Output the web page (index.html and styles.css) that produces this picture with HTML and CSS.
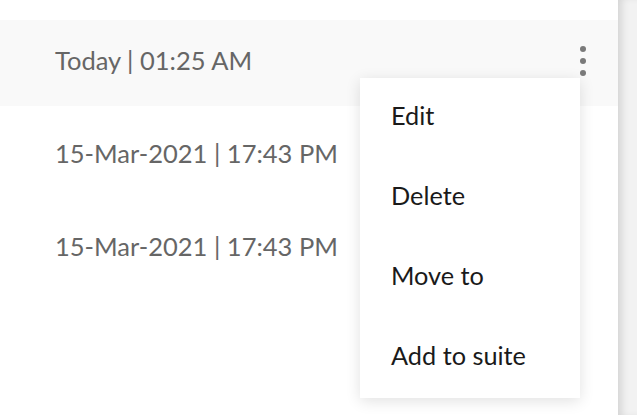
FILE: index.html
```html
<!DOCTYPE html>
<html lang="en">
<head>
    <meta charset="UTF-8">
    <meta name="viewport" content="width=device-width, initial-scale=1.0">
    <title>Runs</title>
    <link rel="stylesheet" href="styles.css">
</head>
<body>
    <div class="layout">
        <!-- Run list -->
        <div class="panel">
            <div class="run-list">
                <div class="run active">
                    <span class="run-date">Today | 01:25 AM</span>
                    <button class="more" aria-label="More">
                        <span class="dot"></span>
                        <span class="dot"></span>
                        <span class="dot"></span>
                    </button>
                </div>
                <div class="run">
                    <span class="run-date">15-Mar-2021 | 17:43 PM</span>
                </div>
                <div class="run">
                    <span class="run-date">15-Mar-2021 | 17:43 PM</span>
                </div>
            </div>

            <!-- Context menu -->
            <ul class="menu">
                <li>Edit</li>
                <li>Delete</li>
                <li>Move to</li>
                <li>Add to suite</li>
            </ul>
        </div>
        <div class="side"></div>
    </div>
</body>
</html>
```

FILE: styles.css
```css
/* Reset */
* {
    margin: 0;
    padding: 0;
    box-sizing: border-box;
}
body {
    font-family: Lato, "Noto Sans", sans-serif;
    background-color: #fff;
    color: #222;
}

.layout {
    display: flex;
    height: 415px;
    overflow: hidden;
}

/* Run list */
.panel {
    position: relative;
    flex: 0 0 618px;
    background-color: #fff;
}
.run-list {
    padding-top: 20px;
}
.run {
    height: 86px;
    margin-bottom: 7px;
    padding: 0 32px 0 55px;
    display: flex;
    align-items: center;
    justify-content: space-between;
}
.run.active {
    background-color: #f9f9f9;
}
.run-date {
    font-size: 25.5px;
    color: #666;
    margin-top: -7px;
}

/* Kebab button */
.more {
    display: flex;
    flex-direction: column;
    gap: 6px;
    border: none;
    background: none;
    margin-top: -4px;
    cursor: pointer;
}
.dot {
    width: 6px;
    height: 6px;
    border-radius: 50%;
    background-color: #7a7a7a;
}

/* Context menu */
.menu {
    position: absolute;
    top: 78px;
    left: 360px;
    width: 220px;
    list-style: none;
    background-color: #fff;
    box-shadow: 0 3px 14px rgba(0, 0, 0, 0.12);
}
.menu li {
    height: 80px;
    padding: 0 0 6px 31px;
    display: flex;
    align-items: center;
    font-size: 25.3px;
    color: #1a1a1a;
    cursor: pointer;
}

/* Right strip */
.side {
    flex: 1;
    background-color: #f2f2f2;
    box-shadow: inset 7px 0 8px -4px rgba(0, 0, 0, 0.14);
}
```
